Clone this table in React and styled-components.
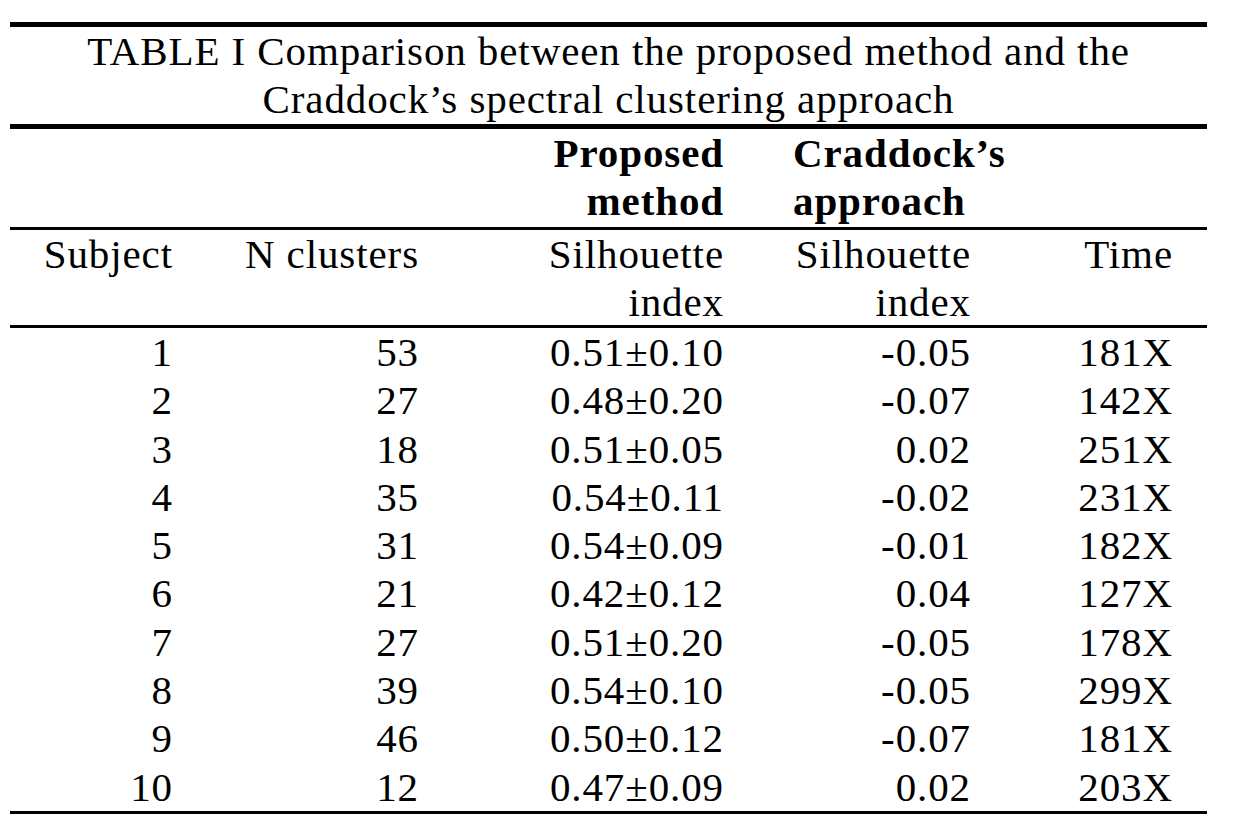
import styled, { createGlobalStyle } from 'styled-components';

const GlobalStyle = createGlobalStyle`
  body {
    margin: 0;
    background: #fff;
    color: #000;
    font-family: 'Liberation Serif', 'Times New Roman', serif;
  }
`;

const rows = [
  ['1', '53', '0.51±0.10', '-0.05', '181X'],
  ['2', '27', '0.48±0.20', '-0.07', '142X'],
  ['3', '18', '0.51±0.05', '0.02', '251X'],
  ['4', '35', '0.54±0.11', '-0.02', '231X'],
  ['5', '31', '0.54±0.09', '-0.01', '182X'],
  ['6', '21', '0.42±0.12', '0.04', '127X'],
  ['7', '27', '0.51±0.20', '-0.05', '178X'],
  ['8', '39', '0.54±0.10', '-0.05', '299X'],
  ['9', '46', '0.50±0.12', '-0.07', '181X'],
  ['10', '12', '0.47±0.09', '0.02', '203X'],
];

const App = () => {
  return (
    <>
      <GlobalStyle />
      <Table>
        <Caption>
          TABLE I Comparison between the proposed method and the
          <br />
          Craddock’s spectral clustering approach
        </Caption>
        <Band $height={98} $rule={3}>
          <Cell />
          <Cell />
          <Cell $bold>{'Proposed\nmethod'}</Cell>
          <Cell $bold $left>{'Craddock’s\napproach'}</Cell>
          <Cell />
        </Band>
        <Band $height={95} $rule={3}>
          <Cell>Subject</Cell>
          <Cell>N clusters</Cell>
          <Cell>{'Silhouette\nindex'}</Cell>
          <Cell>{'Silhouette\nindex'}</Cell>
          <Cell>Time</Cell>
        </Band>
        <Body>
          {rows.map((row) => (
            <DataRow key={row[0]}>
              {row.map((value, i) => (
                <Cell key={i}>{value}</Cell>
              ))}
            </DataRow>
          ))}
        </Body>
      </Table>
    </>
  );
};

export default App;

const columns = '197px 246px 305px 247px 202px';

const Table = styled.div`
  width: 1197px;
  margin: 22px 0 0 10px;
  border-top: 5px solid #000;
  border-bottom: 3px solid #000;

  font-size: 41px;
  line-height: 48px;
  letter-spacing: 0.9px;
`;

const Caption = styled.div`
  height: 97px;
  text-align: center;
  border-bottom: 5px solid #000;
`;

const Band = styled.div`
  display: grid;
  grid-template-columns: ${columns};
  height: ${({ $height }) => $height}px;
  border-bottom: ${({ $rule }) => $rule}px solid #000;
`;

const Body = styled.div`
  display: flex;
  flex-direction: column;
  height: 483px;
`;

const DataRow = styled.div`
  display: grid;
  grid-template-columns: ${columns};
  height: 48.3px;
`;

const Cell = styled.div`
  white-space: pre-line;
  text-align: ${({ $left }) => ($left ? 'left' : 'right')};
  padding: ${({ $left }) => ($left ? '0 0 0 35px' : '0 34px 0 0')};
  font-weight: ${({ $bold }) => ($bold ? 700 : 400)};
`;
